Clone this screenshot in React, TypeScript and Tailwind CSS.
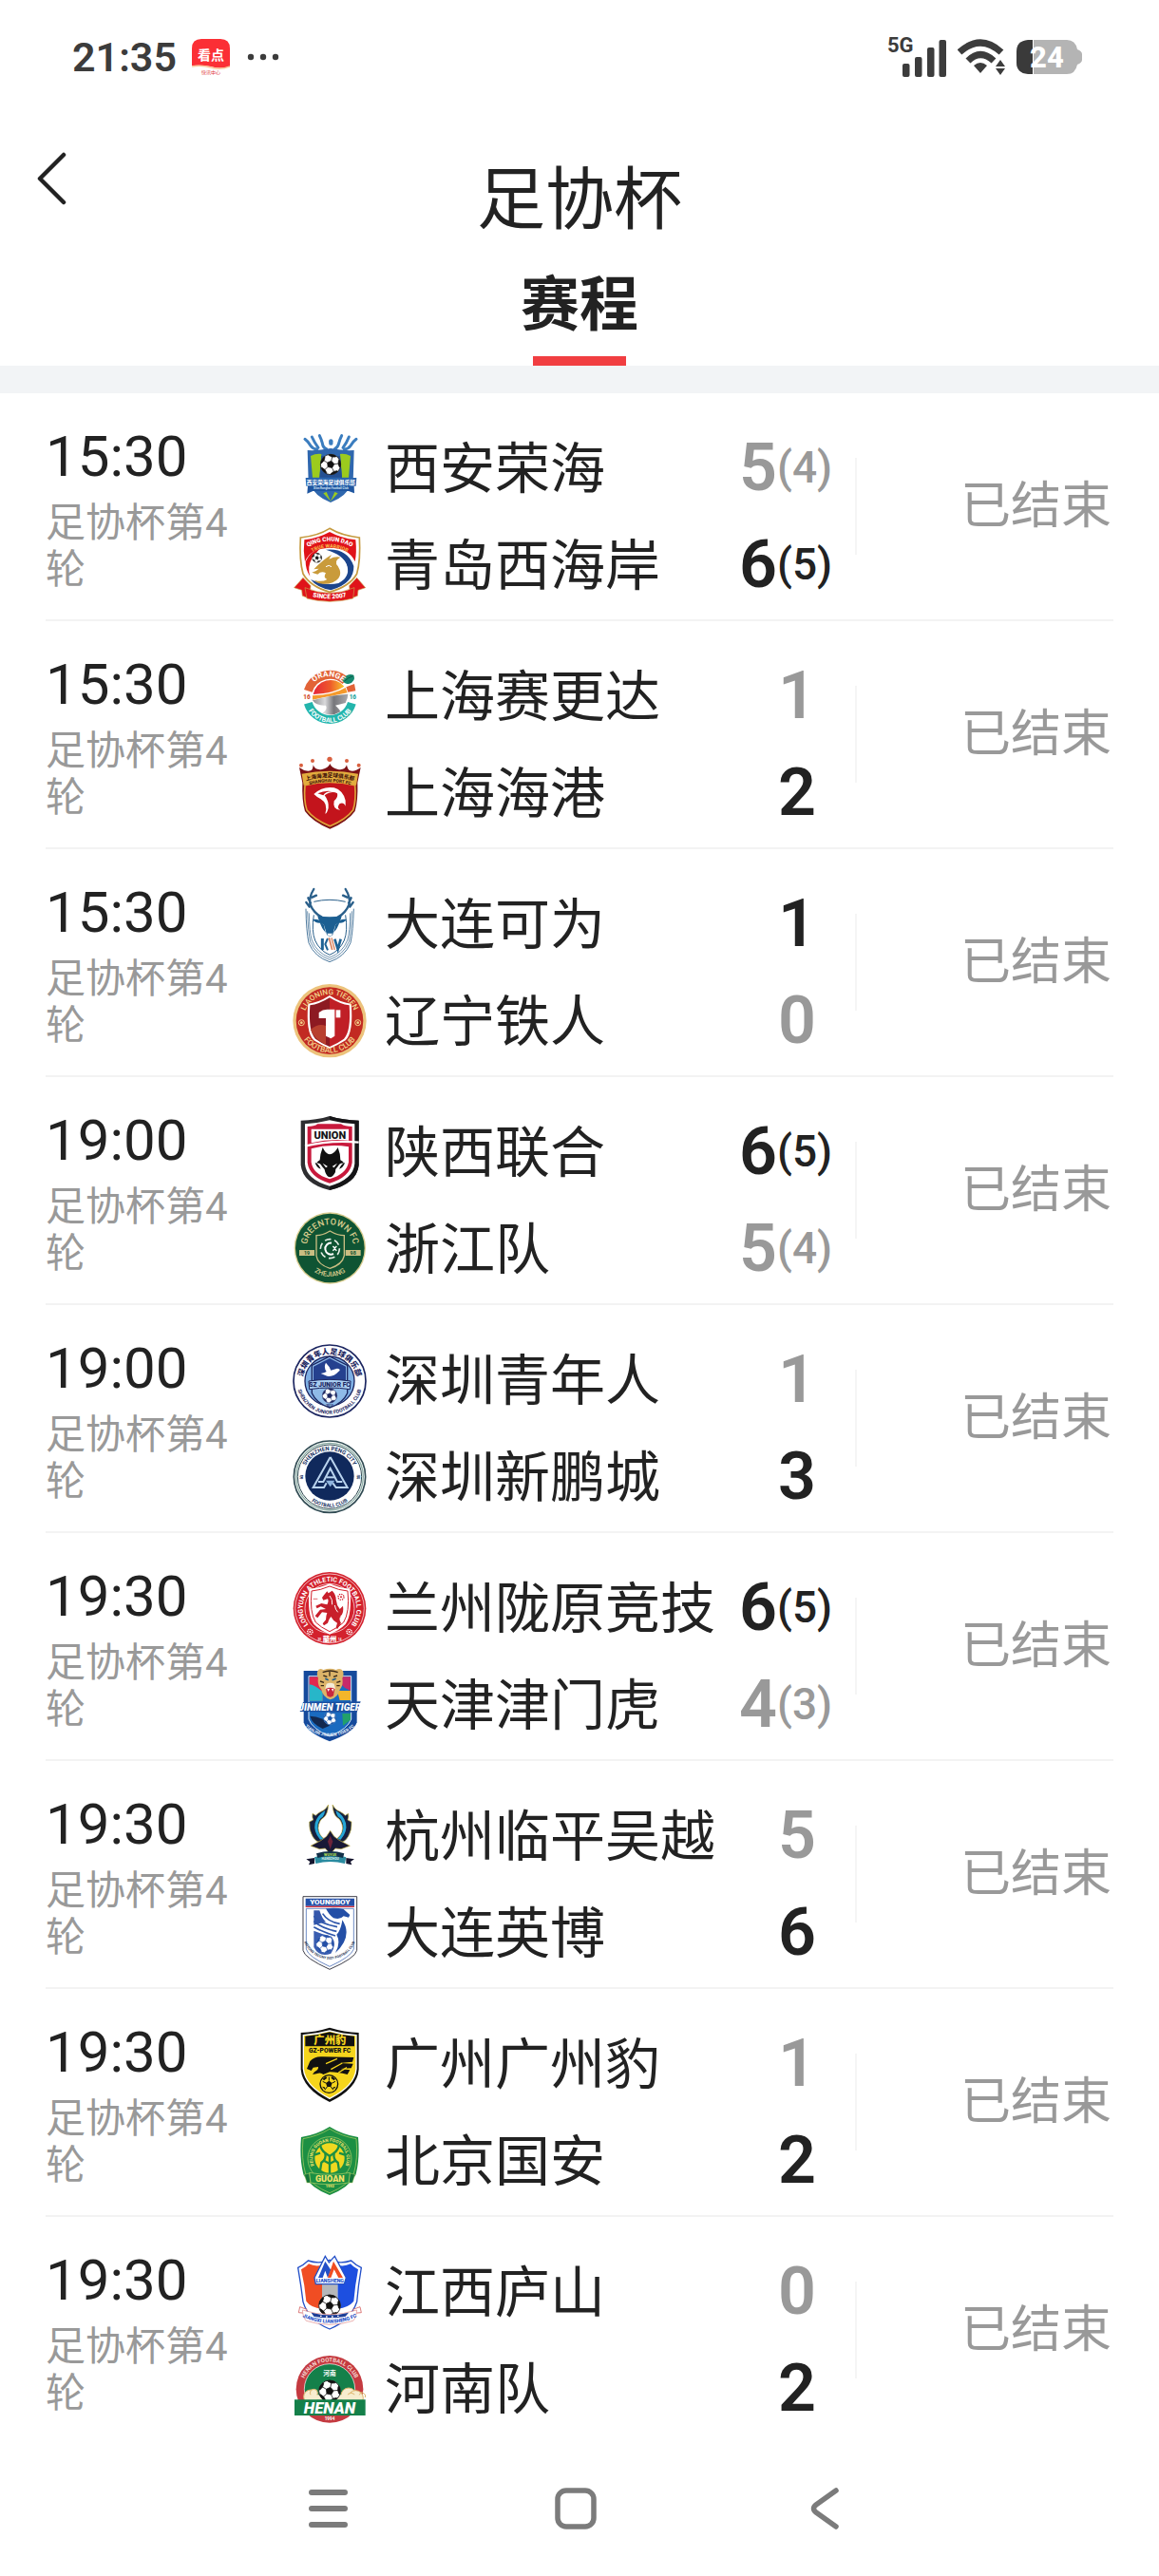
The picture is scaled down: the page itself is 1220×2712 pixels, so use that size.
import { useId } from "react";
import type { ReactNode } from "react";

/* ---------- Drawing helpers for the club badges ---------- */

function Badge({ name, top, children }: { name: string; top: number; children: ReactNode }) {
  return (
    <svg
      role="img"
      aria-label={name}
      viewBox={`52 ${top} 240 240`}
      className="size-20 shrink-0 overflow-visible font-['Roboto','Noto_Sans_CJK_SC',sans-serif]"
    >
      {children}
    </svg>
  );
}

function Ball({ cx, cy, r, dark = "#111" }: { cx: number; cy: number; r: number; dark?: string }) {
  const id = useId();
  const point = (radius: number, deg: number) => {
    const a = ((deg - 90) * Math.PI) / 180;
    return `${(radius * Math.cos(a)).toFixed(1)},${(radius * Math.sin(a)).toFixed(1)}`;
  };
  const turns = [0, 72, 144, 216, 288];
  return (
    <g transform={`translate(${cx} ${cy})`}>
      <clipPath id={id}>
        <circle r={r} />
      </clipPath>
      <circle r={r} fill="#fff" />
      <g clipPath={`url(#${id})`} stroke={dark} strokeWidth={r * 0.07}>
        <polygon points={turns.map((t) => point(r * 0.36, t + 12)).join(" ")} fill={dark} />
        {turns.map((t) => (
          <g key={t}>
            <path d={`M${point(r * 0.36, t + 12)} L${point(r * 0.8, t + 12)}`} />
            <polygon
              points={[
                point(r * 0.76, t + 12),
                point(r * 0.9, t - 10),
                point(r * 1.15, t - 8),
                point(r * 1.15, t + 32),
                point(r * 0.9, t + 34),
              ].join(" ")}
              fill={dark}
            />
          </g>
        ))}
      </g>
      <circle r={r} fill="none" stroke={dark} strokeWidth={r * 0.08} />
    </g>
  );
}

type ArcProps = {
  cx: number;
  cy: number;
  r: number;
  size: number;
  fill: string;
  under?: boolean;
  weight?: number;
  children: string;
};

function ArcText({ cx, cy, r, size, fill, under = false, weight = 700, children }: ArcProps) {
  const id = useId();
  const d = under
    ? `M${cx} ${cy - r} A${r} ${r} 0 0 0 ${cx} ${cy + r} A${r} ${r} 0 0 0 ${cx} ${cy - r}`
    : `M${cx} ${cy + r} A${r} ${r} 0 0 1 ${cx} ${cy - r} A${r} ${r} 0 0 1 ${cx} ${cy + r}`;
  return (
    <>
      <path id={id} d={d} fill="none" />
      <text fontSize={size} fontWeight={weight} fill={fill} textAnchor="middle">
        <textPath href={`#${id}`} startOffset="50%">
          {children}
        </textPath>
      </text>
    </>
  );
}

type LabelProps = {
  x: number;
  y: number;
  size: number;
  fill: string;
  weight?: number;
  italic?: boolean;
  children: string;
};

function Label({ x, y, size, fill, weight = 700, italic = false, children }: LabelProps) {
  return (
    <text
      x={x}
      y={y}
      fontSize={size}
      fontWeight={weight}
      fontStyle={italic ? "italic" : "normal"}
      fill={fill}
      textAnchor="middle"
    >
      {children}
    </text>
  );
}

/* ---------- Club badges ---------- */

function XianRonghai() {
  return (
    <Badge name="西安荣海" top={66}>
      <g fill="none" stroke="#3b7dbf" strokeWidth="9" strokeLinecap="round">
        <path d="M94 97 Q104 104 112 118 Q118 128 132 129" />
        <path d="M116 90 Q124 108 136 124" />
        <path d="M140 86 Q146 98 149 110 Q151 124 162 128" />
        <path d="M176 103 V110" strokeWidth="13" />
        <path d="M210 86 Q204 98 201 110 Q198 124 188 128" />
        <path d="M233 90 Q226 108 214 124" />
        <path d="M256 97 Q246 104 238 118 Q232 128 218 129" />
      </g>
      <path d="M102 132 Q138 134 175 126 Q212 134 249 132 L246 232 Q226 278 175 297 Q124 278 105 232Z" fill="#2f67ae" />
      <path d="M112 150 Q128 142 146 144 L140 218 H118Z" fill="#9ccb1e" />
      <path d="M238 150 Q222 142 205 144 L211 218 H232Z" fill="#9ccb1e" />
      <path d="M146 150 H205 L211 218 H140Z" fill="#245093" />
      <path d="M152 268 L175 293 L162 264Z M198 268 L175 293 L188 264Z" fill="#9ccb1e" />
      <Ball cx={175} cy={177} r={32} />
      <path d="M96 219 H257 L255 245 H98Z" fill="#2b66b0" />
      <path d="M103 245 H249 L250 268 L232 261 H119 L101 269Z" fill="#1f56a0" />
      <Label x={176} y={239} size={17} fill="#fff">西安荣海足球俱乐部</Label>
      <Label x={176} y={255} size={9} fill="#cfe0f3">Xi'an Ronghai Football Club</Label>
    </Badge>
  );
}

function QingdaoWestCoast() {
  return (
    <Badge name="青岛西海岸" top={372}>
      <path d="M60 566 L88 535 L112 560 L108 600 L86 592 L84 574Z" fill="#e0131a" stroke="#c9a04a" strokeWidth="2" />
      <path d="M285 566 L258 535 L234 560 L238 600 L260 592 L262 574Z" fill="#e0131a" stroke="#c9a04a" strokeWidth="2" />
      <path d="M172 379 Q210 402 266 408 Q270 480 258 522 Q236 562 172 580 Q110 562 88 522 Q76 480 80 408 Q136 402 172 379Z" fill="#fff" stroke="#c59a3f" strokeWidth="5" />
      <path d="M172 390 Q208 410 254 415 Q258 456 252 484 Q234 440 172 440 Q110 442 94 484 Q88 450 92 415 Q136 410 172 390Z" fill="#e0131a" />
      <path d="M96 484 Q110 452 140 444 L118 470 Q100 500 110 530 Q96 510 96 484Z" fill="#e0131a" />
      <path d="M160 446 Q228 440 248 498 Q250 552 176 574 Q132 566 112 540 Q158 562 200 552 Q236 532 228 500 Q218 462 160 446Z" fill="#1c458c" />
      <path d="M196 464 Q240 486 222 530 Q204 556 170 550 Q232 516 196 464Z" fill="#fff" />
      <path d="M122 508 Q150 478 178 462 L170 476 Q190 466 206 470 Q184 482 198 498 Q212 520 200 536 Q184 556 150 554 Q130 552 124 542 Q146 550 164 540 Q150 534 160 520 Q146 512 134 524 L116 518 Q128 516 138 506Z" fill="#c99b3b" />
      <path d="M160 500 q10 -8 18 0" stroke="#fff" strokeWidth="3" fill="none" />
      <Ball cx={132} cy={472} r={15} />
      <ArcText cx={172} cy={560} r={141} size={19} fill="#fff" weight={900}>QING CHUN DAO</ArcText>
      <ArcText cx={172} cy={560} r={120} size={16} fill="#f6ae45" weight={900}>TRUE WARRIOR</ArcText>
      <path d="M94 566 Q172 600 250 566 L246 600 Q172 620 100 600Z" fill="#e0131a" stroke="#c9a04a" strokeWidth="2" />
      <ArcText cx={172} cy={370} r={231} size={20} fill="#fff" weight={900} under>SINCE 2007</ArcText>
    </Badge>
  );
}

function ShanghaiSegenda() {
  const sun = useId();
  const steel = useId();
  return (
    <Badge name="上海赛更达" top={786}>
      <defs>
        <linearGradient id={sun}>
          <stop offset="0" stopColor="#e5243a" />
          <stop offset="0.55" stopColor="#ee5a2a" />
          <stop offset="1" stopColor="#f8c62d" />
        </linearGradient>
        <linearGradient id={steel}>
          <stop offset="0" stopColor="#8d8d90" />
          <stop offset="0.35" stopColor="#d9d9db" />
          <stop offset="0.6" stopColor="#77777b" />
          <stop offset="1" stopColor="#a9a9ad" />
        </linearGradient>
      </defs>
      <path d="M104 892 A72 72 0 0 1 222 860" fill="none" stroke="#e26337" strokeWidth="27" />
      <path d="M224 880 L250 870 L254 892 L230 896Z" fill="#e26337" />
      <path d="M104 931 A72 72 0 0 0 242 931" fill="none" stroke="#23b5ac" strokeWidth="27" />
      <path d="M120 903 A56 56 0 0 1 218 878 Q190 898 120 903Z" fill={`url(#${sun})`} />
      <path d="M118 907 Q186 904 222 882 L228 898 Q190 906 118 920Z" fill="#f59a2c" />
      <path d="M118 922 Q170 906 230 902 Q230 914 222 930 L190 938 Q204 950 206 958 Q180 974 150 962 Q166 950 160 938 Q130 940 118 922Z" fill={`url(#${steel})`} />
      <path d="M212 860 Q224 834 248 842 Q256 862 232 870 Q220 870 212 860Z" fill="#16896f" />
      <path d="M218 862 Q230 850 246 845" stroke="#0c5b4b" strokeWidth="3" fill="none" />
      <ArcText cx={168} cy={912} r={65} size={25} fill="#fff" weight={700}>ORANGE</ArcText>
      <ArcText cx={173} cy={912} r={80} size={21} fill="#fff" under>FOOTBALL CLUB</ArcText>
      <Label x={100} y={917} size={19} fill="#d3502f" weight={900}>16</Label>
      <Label x={245} y={917} size={19} fill="#2aa79f" weight={900}>16</Label>
    </Badge>
  );
}

function ShanghaiPort() {
  return (
    <Badge name="上海海港" top={1092}>
      <g fill="#d9603f">
        <circle cx="82" cy="1127" r="6" />
        <circle cx="118" cy="1113" r="6" />
        <circle cx="172" cy="1108" r="8" />
        <circle cx="226" cy="1113" r="6" />
        <circle cx="264" cy="1127" r="6" />
      </g>
      <path d="M76 1134 Q94 1148 112 1144 Q120 1140 120 1126 Q126 1144 148 1140 Q168 1136 173 1122 Q178 1136 198 1140 Q220 1144 226 1126 Q228 1140 236 1144 Q252 1148 270 1134 L260 1182 Q262 1240 252 1272 Q228 1306 173 1328 Q118 1306 94 1272 Q84 1240 86 1182Z" fill="#7b1216" />
      <path d="M94 1190 Q172 1170 252 1190 Q256 1240 246 1268 Q224 1298 173 1319 Q122 1298 100 1268 Q90 1240 94 1190Z" fill="#c3141c" stroke="#e0a23a" strokeWidth="5" />
      <path d="M84 1154 Q172 1136 262 1154 L256 1190 Q172 1168 90 1190Z" fill="#e3ad3e" />
      <path d="M122 1218 Q150 1192 186 1198 Q214 1206 222 1238 L222 1256 Q216 1242 204 1248 Q192 1262 206 1268 Q180 1268 186 1240 Q200 1228 196 1216 Q180 1206 156 1222 Q170 1240 168 1262 Q164 1278 158 1280 Q168 1248 144 1234 Q130 1226 122 1218Z" fill="#fff" />
      <path d="M134 1216 Q160 1204 182 1210 Q160 1208 152 1222Z" fill="#c3141c" />
      <ArcText cx={173} cy={1420} r={255} size={17} fill="#4b1a0c" weight={900}>上海海港足球俱乐部</ArcText>
      <ArcText cx={173} cy={1420} r={240} size={14} fill="#4b1a0c" weight={900}>SHANGHAI PORT FC</ArcText>
    </Badge>
  );
}

function DalianKewei() {
  return (
    <Badge name="大连可为" top={36}>
      <g fill="none" stroke="#2a5f8a">
        <path d="M97 110 Q98 180 106 218 Q124 262 172 278 Q220 262 238 218 Q246 180 248 110" strokeWidth="2.5" />
        <path d="M102 118 Q104 184 111 214 Q128 256 172 271 Q216 256 233 214 Q240 184 242 118" strokeWidth="2" />
        <path d="M107 124 Q108 184 116 210 Q132 250 172 264 Q212 250 228 210 Q236 184 237 124" strokeWidth="2" />
        <path d="M122 130 Q114 180 126 210 Q140 242 172 256 Q204 242 218 210 Q230 180 222 130" strokeWidth="3" />
        <path d="M122 88 Q172 76 222 88" strokeWidth="3" />
      </g>
      <g fill="none" stroke="#2a5f8a" strokeLinecap="round" strokeLinejoin="round">
        <path d="M146 136 Q122 124 110 96 Q106 74 122 48 M112 92 L104 76 M108 104 L98 90 M117 74 L130 68" strokeWidth="7" />
        <path d="M199 136 Q222 124 234 96 Q238 74 222 48 M232 92 L240 76 M236 104 L246 90 M227 74 L214 68" strokeWidth="7" />
      </g>
      <path d="M134 132 Q172 140 210 132 Q208 152 190 162 Q184 180 182 192 Q172 202 163 192 Q160 180 154 162 Q136 152 134 132Z" fill="#1c5f92" />
      <path d="M118 144 Q138 140 148 154 Q128 158 118 144Z M226 144 Q206 140 196 154 Q216 158 226 144Z" fill="#1c5f92" />
      <path d="M140 150 Q146 172 160 186 Q156 176 154 162Z M204 150 Q198 172 184 186 Q188 176 190 162Z" fill="#1c5f92" />
      <path d="M164 188 H181 L177 196 H168Z" fill="#fff" />
      <g fill="none">
        <path d="M149 204 V240" stroke="#1f6395" strokeWidth="9" />
        <path d="M166 204 L158 222 L166 241" stroke="#1f6395" strokeWidth="6" />
        <path d="M170 202 L180 240" stroke="#d9825e" strokeWidth="5" />
        <path d="M178 202 L188 240" stroke="#d9825e" strokeWidth="4" />
        <path d="M188 206 L198 238 L207 206" stroke="#1f6395" strokeWidth="8" />
      </g>
    </Badge>
  );
}

function LiaoningTieren() {
  return (
    <Badge name="辽宁铁人" top={342}>
      <circle cx="172" cy="464" r="116" fill="#ecc37c" />
      <circle cx="172" cy="464" r="106" fill="#c22a22" />
      <path d="M172 384 Q210 408 240 410 Q248 500 222 526 Q200 540 172 552 Q144 540 122 526 Q96 500 104 410 Q134 408 172 384Z" fill="#fff" />
      <path d="M172 391 Q206 412 234 415 Q240 498 217 521 Q198 535 172 546Z" fill="#c01f26" />
      <path d="M172 391 Q138 412 110 415 Q104 498 127 521 Q146 535 172 546Z" fill="#8d1a22" />
      <path d="M112 492 Q136 470 160 480 V540 Q120 520 112 492Z" fill="#b8402f" />
      <path d="M138 438 Q150 428 164 428 H188 V512 L176 520 L160 512 V456 H138Z" fill="#fff" />
      <path d="M192 430 H206 V454 H192Z" fill="#fff" />
      <ArcText cx={172} cy={464} r={83} size={24} fill="#f3d58c" weight={500}>LIAONING TIEREN</ArcText>
      <ArcText cx={172} cy={464} r={101} size={25} fill="#f3d58c" weight={500} under>FOOTBALL CLUB</ArcText>
      <g fill="none" stroke="#f3d58c" strokeWidth="3">
        <circle cx="83" cy="470" r="9" />
        <circle cx="261" cy="470" r="9" />
      </g>
      <circle cx="83" cy="470" r="4" fill="#f3d58c" />
      <circle cx="261" cy="470" r="4" fill="#f3d58c" />
    </Badge>
  );
}

function ShaanxiUnion() {
  return (
    <Badge name="陕西联合" top={756}>
      <path d="M172 765 Q214 778 264 779 V920 Q258 978 172 999 Q88 978 81 920 V779 Q130 778 172 765Z" fill="#2e2e31" />
      <path d="M172 765 Q214 778 264 779 V920 Q258 978 172 999Z" fill="#151517" />
      <path d="M172 778 Q210 788 251 790 V916 Q246 966 172 986 Q98 966 94 916 V790 Q134 788 172 778Z" fill="#fff" />
      <path d="M102 798 Q124 798 134 790 H208 Q220 798 243 798 V912 Q236 958 172 977 Q108 958 102 912Z" fill="#c8193c" />
      <path d="M114 806 H232 V842 Q172 836 114 850Z" fill="#fff" />
      <path d="M94 860 Q172 840 264 848" stroke="#fff" strokeWidth="7" fill="none" />
      <path d="M114 868 Q172 852 232 862 V910 Q226 948 172 964 Q118 948 114 910Z" fill="#fff" />
      <path d="M150 864 Q160 886 172 886 Q186 886 198 864 Q206 884 206 904 Q214 908 218 914 Q204 912 198 924 Q190 930 190 942 Q182 958 173 958 Q164 958 158 942 Q156 930 148 924 Q142 912 130 914 Q134 908 141 904 Q142 884 150 864Z" fill="#111" />
      <path d="M126 912 Q136 914 144 932 Q130 928 126 912Z M220 912 Q210 914 202 932 Q216 928 220 912Z" fill="#111" />
      <path d="M150 914 L166 924 L160 928Z M196 914 L180 924 L186 928Z" fill="#fff" />
      <Label x={173} y={836} size={33} fill="#151517" weight={900}>UNION</Label>
    </Badge>
  );
}

function ZhejiangGreentown() {
  return (
    <Badge name="浙江队" top={1062}>
      <circle cx="173" cy="1182" r="113" fill="#d8cc8e" />
      <circle cx="173" cy="1182" r="109" fill="#0f5433" />
      <path d="M173 1128 Q196 1142 218 1142 V1206 Q212 1234 173 1246 Q134 1234 130 1206 V1142 Q150 1142 173 1128Z" fill="none" stroke="#c9bd82" strokeWidth="4" />
      <circle cx="173" cy="1184" r="30" fill="none" stroke="#e7efe6" strokeWidth="5" strokeDasharray="20 11" />
      <path d="M178 1166 A18 18 0 1 0 184 1200" fill="none" stroke="#fff" strokeWidth="6" />
      <path d="M182 1176 l6 6 l6 -6 M182 1190 l6 -6 l6 6" stroke="#fff" strokeWidth="4" fill="none" />
      <path d="M76 1188 H124 V1206 H76Z M222 1188 H270 V1206 H222Z" fill="#c9bd82" />
      <Label x={100} y={1203} size={16} fill="#0f5433">19</Label>
      <Label x={246} y={1203} size={16} fill="#0f5433">98</Label>
      <ArcText cx={173} cy={1182} r={74} size={28} fill="#d8cc8e" weight={500}>GREENTOWN FC</ArcText>
      <ArcText cx={173} cy={1182} r={90} size={22} fill="#d8cc8e" weight={500} under>ZHEJIANG</ArcText>
    </Badge>
  );
}

function ShenzhenJuniors() {
  return (
    <Badge name="深圳青年人" top={36}>
      <circle cx="172" cy="162" r="114" fill="#fff" stroke="#1b2560" strokeWidth="5" />
      <circle cx="172" cy="162" r="78" fill="#7fb0e4" stroke="#1b2560" strokeWidth="4" />
      <path d="M172 84 L228 112 V200 Q214 232 172 246 Q130 232 116 200 V112Z" fill="#8fbbe8" stroke="#1b2560" strokeWidth="4" />
      <path d="M172 90 L223 116 V160 H121 V116Z" fill="#25418f" />
      <path d="M160 104 Q172 116 176 128 L196 122 Q210 124 200 132 Q184 150 164 146 L144 138 Q156 136 162 132 Q152 118 160 104Z" fill="#fff" />
      <path d="M106 162 Q172 152 238 162 L236 188 Q172 178 108 188Z" fill="#a9cdf0" stroke="#1b2560" strokeWidth="3" />
      <Label x={172} y={179} size={20} fill="#1b2560" weight={900}>SZ JUNIOR FC</Label>
      <Ball cx={172} cy={208} r={23} dark="#1b2560" />
      <Label x={172} y={242} size={10} fill="#1b2560">2015</Label>
      <ArcText cx={172} cy={162} r={85} size={24} fill="#1b2560" weight={900}>深圳青年人足球俱乐部</ArcText>
      <ArcText cx={172} cy={162} r={104} size={16} fill="#1b2560" under>SHENZHEN JUNIOR FOOTBALL CLUB</ArcText>
    </Badge>
  );
}

function ShenzhenPengCity() {
  return (
    <Badge name="深圳新鹏城" top={342}>
      <circle cx="172" cy="464" r="113" fill="#fff" stroke="#2f4a52" strokeWidth="5" />
      <circle cx="172" cy="464" r="106" fill="none" stroke="#8fb0a8" strokeWidth="4" />
      <circle cx="172" cy="464" r="101" fill="none" stroke="#2f4a52" strokeWidth="3" />
      <circle cx="172" cy="462" r="77" fill="#10295c" />
      <g fill="none" stroke="#b9d3ee" strokeWidth="6" strokeLinejoin="miter">
        <path d="M174 402 L120 498 H154 L162 484 M182 484 L192 498 H228 L174 402" />
        <path d="M136 480 H152 L174 438 L196 480 H212" />
        <path d="M162 466 H188" />
      </g>
      <path d="M160 476 H188 L174 496Z" fill="#8fb4de" />
      <ArcText cx={172} cy={464} r={83} size={18} fill="#16305f">SHENZHEN PENG CITY</ArcText>
      <ArcText cx={172} cy={464} r={96} size={16} fill="#16305f" under>FOOTBALL CLUB</ArcText>
      <Label x={83} y={471} size={12} fill="#16305f">深</Label>
      <Label x={263} y={471} size={12} fill="#16305f">圳</Label>
    </Badge>
  );
}

function LanzhouLongyuan() {
  return (
    <Badge name="兰州陇原竞技" top={36}>
      <circle cx="172" cy="160" r="115" fill="#d3212d" />
      <circle cx="172" cy="160" r="109" fill="none" stroke="#fff" strokeWidth="2" />
      <circle cx="172" cy="160" r="78" fill="none" stroke="#fff" strokeWidth="2" />
      <path d="M172 82 Q204 96 236 98 Q244 176 222 210 Q204 228 172 242 Q140 228 122 210 Q100 176 108 98 Q140 96 172 82Z" fill="#fff" />
      <path d="M172 90 Q202 103 229 105 Q236 172 216 204 Q200 220 172 233 Q144 220 128 204 Q108 172 115 105 Q142 103 172 90Z" fill="none" stroke="#d3212d" strokeWidth="3" />
      <path d="M154 118 L164 106 L168 112 L180 104 Q192 116 192 132 Q194 150 204 162 L214 152 Q218 176 206 184 Q200 196 208 206 L196 226 L192 220 L196 206 Q182 198 176 186 Q168 196 166 206 L154 214 L150 208 L160 196 Q160 184 164 174 L148 172 L134 190 L126 184 L142 164 L160 162 L144 154 L132 160 L128 152 L146 144 L164 148 Q170 136 166 130 L152 134 L148 126Z" fill="#c81f2b" />
      <path d="M172 120 Q182 132 180 148 M188 150 Q190 164 198 172" stroke="#fff" strokeWidth="3" fill="none" />
      <circle cx="208" cy="124" r="9" fill="none" stroke="#d3212d" strokeWidth="4" strokeDasharray="4 3" />
      <circle cx="208" cy="124" r="3" fill="#d3212d" />
      <path d="M120 130 h14 M194 186 h14" stroke="#d3212d" strokeWidth="2" />
      <ArcText cx={172} cy={160} r={85} size={21} fill="#fff">LONGYUAN ATHLETIC FOOTBALL CLUB</ArcText>
      <g fill="none" stroke="#fff" strokeWidth="4" strokeDasharray="4 2">
        <circle cx="110" cy="234" r="8" />
        <circle cx="234" cy="234" r="8" />
      </g>
      <circle cx="110" cy="234" r="3" fill="#fff" />
      <circle cx="234" cy="234" r="3" fill="#fff" />
      <Label x={172} y={264} size={22} fill="#fff" weight={900}>蘭州</Label>
      <Label x={140} y={262} size={9} fill="#fff">20</Label>
      <Label x={204} y={262} size={9} fill="#fff">14</Label>
    </Badge>
  );
}

function TianjinJinmenTiger() {
  return (
    <Badge name="天津津门虎" top={342}>
      <path d="M90 357 H258 V520 Q248 552 172 580 Q100 552 90 520Z" fill="#164a9c" />
      <path d="M106 374 H240 V510 Q230 540 172 564 Q116 540 106 510Z" fill="#1a6bc0" stroke="#d5e6f5" strokeWidth="3" />
      <path d="M108 376 H150 V452 H108Z" fill="#e2284f" />
      <path d="M108 400 Q130 404 150 424 V452 H108Z" fill="#27b6c9" />
      <path d="M196 420 H238 V450 H204Z" fill="#f3b62b" />
      <path d="M208 376 H238 V420 Q220 414 208 400Z" fill="#c62a6a" />
      <path d="M110 500 Q150 500 172 530 L150 540 Q116 524 110 500Z" fill="#13294f" />
      <path d="M212 492 H238 V512 L214 530Z" fill="#22a06a" />
      <path d="M134 358 Q140 346 152 354 Q174 346 192 354 Q206 346 214 358 Q218 370 212 380 Q216 402 204 416 Q200 440 174 448 Q150 440 146 416 Q132 402 136 380 Q130 370 134 358Z" fill="#dcb469" />
      <path d="M150 362 Q174 352 198 362 M152 372 L164 376 M196 372 L184 376 M142 390 L154 394 M206 390 L194 394 M172 356 V374 M144 404 L154 404 M204 404 L194 404" stroke="#3a2a1a" strokeWidth="4" fill="none" />
      <path d="M158 382 l10 4 M192 382 l-12 4" stroke="#1a5a8a" strokeWidth="5" />
      <path d="M162 398 Q174 392 186 398 L190 414 H158Z" fill="#f5ecd8" />
      <path d="M160 414 Q174 406 188 414 L184 436 Q174 444 164 436Z" fill="#c8283e" />
      <path d="M164 414 l4 9 l4 -9 M178 414 l4 9 l3 -9" fill="#fff" />
      <path d="M78 486 L88 456 L270 454 L258 488Z" fill="#1b4f9f" />
      <Label x={173} y={482} size={30} fill="#fff" weight={900} italic>JINMEN TIGER</Label>
      <Ball cx={173} cy={507} r={20} dark="#1a57a8" />
      <ArcText cx={172} cy={450} r={114} size={14} fill="#e5effa" under>TIANJIN JINMEN TIGER FC</ArcText>
    </Badge>
  );
}

function HangzhouWuyue() {
  const wing =
    "M168 60 Q160 74 152 78 Q134 86 128 94 L118 88 Q116 100 120 108 L108 114 Q106 140 118 160 Q126 176 146 182 L160 170 Q138 160 136 134 Q138 108 154 100 Q166 90 168 60Z";
  const feather = "M158 78 Q132 94 126 118 Q120 146 142 170 L152 168 Q134 152 134 130 Q136 104 150 98 Q156 90 158 78Z";
  return (
    <Badge name="杭州临平吴越" top={36}>
      <path d={wing} fill="#16203f" stroke="#c8b84a" strokeWidth="2" />
      <path d={feather} fill="#25a6d6" />
      <g transform="translate(349 0) scale(-1 1)">
        <path d={wing} fill="#16203f" stroke="#c8b84a" strokeWidth="2" />
        <path d={feather} fill="#25a6d6" />
      </g>
      <path d="M174 142 L186 160 L202 172 L236 190 L208 200 L190 198 L174 216 L158 198 L140 200 L112 190 L146 172 L162 160Z" fill="#191936" stroke="#c8b84a" strokeWidth="2" />
      <path d="M174 158 L182 176 L174 200 L166 176Z" fill="#6d2339" />
      <path d="M98 232 L124 228 V246 L106 250 L110 240Z M250 232 L224 228 V246 L242 250 L238 240Z" fill="#15152e" />
      <path d="M124 226 Q174 208 224 226 L220 246 Q174 234 128 246Z" fill="#2a8ba0" />
      <path d="M130 214 Q174 200 218 214 L214 228 Q174 216 134 228Z" fill="#123049" />
      <Label x={174} y={221} size={12} fill="#a9d45a" weight={900}>WUYUE</Label>
      <Label x={174} y={235} size={10} fill="#dff0e8">HANGZHOU</Label>
    </Badge>
  );
}

function DalianYoungboy() {
  return (
    <Badge name="大连英博" top={342}>
      <path d="M88 350 H258 V520 Q254 544 172 580 Q92 544 88 520Z" fill="#fff" stroke="#3f3f4a" strokeWidth="3" />
      <path d="M96 356 H250 V380 H96Z" fill="#2450a8" />
      <path d="M96 380 H250 V384 H96Z" fill="#d8303a" />
      <path d="M98 388 H248 V516 Q240 540 172 571 Q104 540 98 516Z" fill="#fff" stroke="#2450a8" strokeWidth="2" />
      <Label x={173} y={376} size={24} fill="#fff" weight={900}>YOUNGBOY</Label>
      <path d="M122 394 H140 Q148 420 160 430 L122 440Z" fill="#3558ac" />
      <path d="M160 388 Q192 384 216 390 L236 408 L232 416 L216 412 Q206 424 184 418 Q170 408 160 388Z" fill="#244fa6" />
      <g fill="none" stroke="#2f57ab" strokeWidth="5">
        <path d="M122 412 Q140 436 196 446" />
        <path d="M122 428 Q146 450 194 460" />
        <path d="M122 446 Q150 462 190 474" />
        <path d="M150 404 Q166 430 204 436" />
      </g>
      <path d="M212 424 Q246 476 190 528 Q208 496 194 470 Q208 456 212 424Z" fill="#244fa6" />
      <path d="M122 458 Q150 470 178 476 Q196 500 176 530 Q140 544 122 510Z" fill="#3a5db0" />
      <Ball cx={157} cy={500} r={28} dark="#244fa6" />
      <ArcText cx={172} cy={462} r={86} size={11} fill="#20304f" under>BEITONG TECCNY 2021 FOOTBALL CLUB</ArcText>
    </Badge>
  );
}

function GuangzhouPower() {
  return (
    <Badge name="广州广州豹" top={36}>
      <path d="M172 44 Q218 58 264 60 V176 Q260 236 172 279 Q86 236 81 176 V60 Q128 58 172 44Z" fill="#111" />
      <path d="M172 54 Q216 66 256 68 V174 Q252 228 172 268 Q94 228 89 174 V68 Q130 66 172 54Z" fill="#f5d51c" stroke="#fff" strokeWidth="4" />
      <path d="M172 58 Q214 69 250 71 V103 H95 V71 Q132 69 172 58Z" fill="#111" />
      <Label x={173} y={96} size={34} fill="#f5d51c" weight={900}>广州豹</Label>
      <Label x={172} y={123} size={20} fill="#111" weight={900}>GZ-POWER FC</Label>
      <path d="M100 174 L110 150 Q124 134 150 136 L248 138 L244 152 L204 156 L246 158 L240 172 L206 174 L236 178 L228 192 Q196 184 172 184 L152 192 Q144 184 130 190 L118 192 L124 184 Q138 176 136 168 L120 170 L114 180Z" fill="#111" />
      <path d="M160 158 L196 142 M176 176 L212 156 M200 186 L226 170" stroke="#f5d51c" strokeWidth="4" />
      <circle cx="170" cy="222" r="30" fill="#111" />
      <circle cx="170" cy="222" r="26" fill="#f5d51c" />
      <path d="M170 212 l10 7 l-4 12 h-12 l-4 -12Z M150 206 l10 -8 l4 5 l-10 8Z M190 206 l-10 -8 l-4 5 l10 8Z M148 230 l8 2 l4 10Z M192 230 l-8 2 l-4 10Z" fill="#111" />
      <path d="M170 212 V200 M180 219 l10 -5 M176 231 l6 8 M164 231 l-6 8 M160 219 l-10 -5" stroke="#111" strokeWidth="3" />
    </Badge>
  );
}

function BeijingGuoan() {
  return (
    <Badge name="北京国安" top={342}>
      <path d="M172 357 Q212 382 262 390 Q268 460 254 510 Q232 550 172 573 Q112 550 90 510 Q76 460 82 390 Q132 382 172 357Z" fill="#1c8f43" />
      <path d="M172 364 Q210 387 256 395 Q262 458 248 506 Q228 544 172 566 Q116 544 96 506 Q82 458 88 395 Q134 387 172 364Z" fill="none" stroke="#b6d46a" strokeWidth="2" />
      <circle cx="172" cy="458" r="69" fill="none" stroke="#b6d46a" strokeWidth="2" />
      <circle cx="172" cy="456" r="47" fill="#f0d820" />
      <g fill="none" stroke="#1c8f43" strokeWidth="7">
        <path d="M142 412 Q144 430 158 440 Q162 460 146 470 L142 496" />
        <path d="M202 412 Q200 430 186 440 Q182 460 198 470 L202 496" />
        <path d="M158 440 L172 450 L186 440 M172 450 V472 M154 464 L172 474 L190 464" />
        <path d="M124 446 L142 440 M220 446 L202 440 M172 474 V506" />
      </g>
      <path d="M92 508 L108 504 L112 534 L100 534 Z M252 508 L236 504 L232 534 L244 534Z" fill="#15733a" stroke="#b6d46a" strokeWidth="1.5" />
      <path d="M108 502 Q172 514 236 502 L232 534 Q172 544 112 534Z" fill="#1c8f43" stroke="#b6d46a" strokeWidth="2" />
      <Label x={173} y={531} size={27} fill="#f2e36a" weight={900}>GUOAN</Label>
      <Label x={173} y={550} size={12} fill="#f2e36a">1992</Label>
      <ArcText cx={172} cy={458} r={54} size={14} fill="#f2e36a">BEIJING GUOAN FOOTBALL CLUB</ArcText>
    </Badge>
  );
}

function JiangxiLushan() {
  return (
    <Badge name="江西庐山" top={36}>
      <path d="M104 60 Q140 72 172 58 Q204 72 240 60 Q254 74 272 82 Q262 140 258 190 Q238 250 172 276 Q106 250 88 190 Q82 140 72 82 Q90 74 104 60Z" fill="#fff" stroke="#2450c8" strokeWidth="4" />
      <path d="M106 70 Q126 80 148 74 V212 Q112 208 98 188 Q94 140 82 88 Q98 80 106 70Z" fill="#f04d23" />
      <path d="M238 70 Q218 80 197 74 V212 Q232 208 248 188 Q252 140 262 88 Q246 80 238 70Z" fill="#1d4fe0" />
      <path d="M148 130 H197 V200 H148Z" fill="#b5b7ba" />
      <path d="M124 114 L158 46 L170 66 L188 46 L224 114 L218 134 H128Z" fill="#fff" stroke="#2450c8" strokeWidth="4" />
      <path d="M136 114 L158 62 L176 90 L166 114 L158 92 L150 114Z" fill="#2450c8" />
      <path d="M166 114 L184 62 L214 114 H200 L186 88 L176 114Z" fill="#f04d23" />
      <Label x={173} y={130} size={16} fill="#2450c8" weight={900}>LIANSHENG</Label>
      <Ball cx={172} cy={202} r={34} />
      <path d="M78 206 L100 214 L96 226 L74 224Z M268 206 L246 214 L250 226 L272 224Z" fill="#fff" stroke="#c93c3c" strokeWidth="2" />
      <path d="M86 216 Q172 244 258 216 Q256 240 246 250 Q172 274 98 250 Q88 240 86 216Z" fill="#fff" stroke="#e08a8a" strokeWidth="2" />
      <path d="M114 224 Q172 240 232 224 L222 236 Q172 246 122 236Z" fill="#1c3d96" />
      <path d="M142 235 h5 M160 237 h5 M178 237 h5 M196 235 h5" stroke="#fff" strokeWidth="4" />
      <ArcText cx={172} cy={60} r={197} size={16} fill="#2450c8" weight={900} under>JIANGXI LIANSHENG FC</ArcText>
    </Badge>
  );
}

function Henan() {
  return (
    <Badge name="河南队" top={342}>
      <circle cx="172" cy="466" r="106" fill="#c43a40" />
      <circle cx="172" cy="466" r="80" fill="#14804a" stroke="#fff" strokeWidth="2" />
      <g fill="#f7edcf" stroke="#dcb56a" strokeWidth="3">
        <circle cx="112" cy="490" r="22" />
        <circle cx="122" cy="478" r="12" />
        <circle cx="232" cy="486" r="24" />
        <circle cx="254" cy="494" r="24" />
        <circle cx="240" cy="490" r="12" />
      </g>
      <path d="M100 484 H260 V500 H100Z" fill="#f7edcf" />
      <path d="M266 484 Q272 470 280 480 Q288 482 284 492" fill="none" stroke="#dcb56a" strokeWidth="3" />
      <Ball cx={172} cy={472} r={34} />
      <path d="M61 499 H285 V549 H61Z" fill="#14804a" />
      <Label x={172} y={542} size={50} fill="#fff" weight={900} italic>HENAN</Label>
      <Label x={172} y={424} size={20} fill="#fff">河南</Label>
      <Label x={172} y={565} size={14} fill="#fff">1994</Label>
      <ArcText cx={172} cy={466} r={87} size={18} fill="#f6d9d4">HENAN FOOTBALL CLUB</ArcText>
    </Badge>
  );
}

/* ---------- Match data ---------- */

type Team = { name: string; badge: () => ReactNode; score: number; penalties?: number; won: boolean };
type Match = { time: string; round: string; status: string; teams: [Team, Team] };

const ROUND = "足协杯第4轮";
const FINISHED = "已结束";

function match(time: string, home: Team, away: Team): Match {
  return { time, round: ROUND, status: FINISHED, teams: [home, away] };
}

const matches: Match[] = [
  match(
    "15:30",
    { name: "西安荣海", badge: XianRonghai, score: 5, penalties: 4, won: false },
    { name: "青岛西海岸", badge: QingdaoWestCoast, score: 6, penalties: 5, won: true },
  ),
  match(
    "15:30",
    { name: "上海赛更达", badge: ShanghaiSegenda, score: 1, won: false },
    { name: "上海海港", badge: ShanghaiPort, score: 2, won: true },
  ),
  match(
    "15:30",
    { name: "大连可为", badge: DalianKewei, score: 1, won: true },
    { name: "辽宁铁人", badge: LiaoningTieren, score: 0, won: false },
  ),
  match(
    "19:00",
    { name: "陕西联合", badge: ShaanxiUnion, score: 6, penalties: 5, won: true },
    { name: "浙江队", badge: ZhejiangGreentown, score: 5, penalties: 4, won: false },
  ),
  match(
    "19:00",
    { name: "深圳青年人", badge: ShenzhenJuniors, score: 1, won: false },
    { name: "深圳新鹏城", badge: ShenzhenPengCity, score: 3, won: true },
  ),
  match(
    "19:30",
    { name: "兰州陇原竞技", badge: LanzhouLongyuan, score: 6, penalties: 5, won: true },
    { name: "天津津门虎", badge: TianjinJinmenTiger, score: 4, penalties: 3, won: false },
  ),
  match(
    "19:30",
    { name: "杭州临平吴越", badge: HangzhouWuyue, score: 5, won: false },
    { name: "大连英博", badge: DalianYoungboy, score: 6, won: true },
  ),
  match(
    "19:30",
    { name: "广州广州豹", badge: GuangzhouPower, score: 1, won: false },
    { name: "北京国安", badge: BeijingGuoan, score: 2, won: true },
  ),
  match(
    "19:30",
    { name: "江西庐山", badge: JiangxiLushan, score: 0, won: false },
    { name: "河南队", badge: Henan, score: 2, won: true },
  ),
];

/* ---------- Page parts ---------- */

function StatusBar() {
  return (
    <div className="flex h-[120px] items-center justify-between pr-20 pl-[76px] text-[#3c3c3c]">
      <div className="flex items-center">
        <span className="text-[43px] leading-[46px] font-semibold">21:35</span>
        <svg viewBox="0 0 40 38" className="ml-4 h-[38px] w-10" role="img" aria-label="看点">
          <path d="M0 10 Q0 0 10 0 H30 Q40 0 40 10 V29 Q30 32 20 29 Q10 27 0 28Z" fill="#fb2f35" />
          <path d="M0 29 Q10 27 20 30 Q30 33 40 29" fill="none" stroke="#f9c79b" strokeWidth="1.5" />
          <text x="20" y="22" fontSize="14" fontWeight="700" fill="#fff" textAnchor="middle">看点</text>
          <text x="20" y="37" fontSize="5" fill="#e0343a" textAnchor="middle">快讯中心</text>
        </svg>
        <svg viewBox="0 0 34 8" className="ml-[18px] h-2 w-[34px]" aria-hidden="true" fill="currentColor">
          <circle cx="4" cy="4" r="3.2" />
          <circle cx="17" cy="4" r="3.2" />
          <circle cx="30" cy="4" r="3.2" />
        </svg>
      </div>
      <div className="flex items-center">
        <svg viewBox="0 -8 64 60" className="h-[60px] w-16" role="img" aria-label="5G 信号" fill="currentColor">
          <text x="0" y="17" fontSize="22" fontWeight="700">5G</text>
          <rect x="16" y="29" width="7.5" height="14" rx="2" />
          <rect x="29" y="22" width="7.5" height="21" rx="2" />
          <rect x="42" y="12" width="7.5" height="31" rx="2" />
          <rect x="54.5" y="4" width="7.5" height="39" rx="2" />
        </svg>
        <svg viewBox="0 0 52 40" className="ml-2.5 h-10 w-[52px]" role="img" aria-label="无线网络">
          <g fill="none" stroke="currentColor" strokeWidth="7">
            <path d="M2 15 Q24 -5 46 15" />
            <path d="M11 24 Q24 11 38 24" />
          </g>
          <path d="M17 29 Q24 23 31 29 L24 37Z" fill="currentColor" />
          <path d="M45 23 L50 30 H40Z M45 39 L50 32 H40Z" fill="currentColor" />
        </svg>
        <svg viewBox="0 0 70 36" className="ml-2.5 h-9 w-[70px]" role="img" aria-label="电量 24%">
          <path d="M18 0 H53 Q62 0 64 10 Q69 12 69 15 V21 Q69 24 64 26 Q62 36 53 36 H18Z" fill="#b4b4b4" />
          <path d="M17 0 H12 Q0 1 0 12 V24 Q0 35 12 36 H17Z" fill="#3a3a3a" />
          <text x="32" y="29" fontSize="31" fontWeight="800" fill="#fff" textAnchor="middle">24</text>
        </svg>
      </div>
    </div>
  );
}

function Header() {
  return (
    <header className="relative flex flex-col items-center pt-11 font-['Noto_Sans_CJK_SC',sans-serif] text-[#222]">
      <button type="button" aria-label="返回" className="absolute top-8 left-[30px] p-1">
        <svg viewBox="0 0 36 60" className="h-[60px] w-9" fill="none" stroke="currentColor" strokeWidth="4.5" strokeLinecap="round" strokeLinejoin="round">
          <path d="M33 7 L8 32 L33 57" />
        </svg>
      </button>
      <h1 className="text-[72px] leading-20 font-normal">足协杯</h1>
      <nav className="mt-8">
        <button type="button" aria-current="page" className="flex flex-col items-center text-[62px] leading-20 font-bold">
          赛程
          <span className="mt-[19px] h-2.5 w-[98px] bg-[#f13e41]" />
        </button>
      </nav>
    </header>
  );
}

function TeamRow({ team }: { team: Team }) {
  const Crest = team.badge;
  const tone = team.won ? "text-[#222]" : "text-[#999]";
  const align = team.penalties === undefined ? "justify-center" : "justify-start";
  return (
    <div className="flex h-[102px] items-center">
      <Crest />
      <span className="ml-[18px] flex-1 pt-1 text-[58px] leading-[60px] whitespace-nowrap text-[#222]">{team.name}</span>
      <span className={`flex w-[122px] items-center font-semibold ${align} ${tone}`}>
        <span className="text-[70px] leading-[70px]">{team.score}</span>
        {team.penalties !== undefined && (
          <span className="text-[46px] leading-[46px] font-medium">({team.penalties})</span>
        )}
      </span>
    </div>
  );
}

function MatchRow({ match: m }: { match: Match }) {
  return (
    <li className="mx-12 flex border-b-2 border-[#f3f3f3] last:border-transparent">
      <div className="w-[200px] pt-[34px]">
        <time className="block text-[60px] leading-[66px] text-[#222]">{m.time}</time>
        <p className="mt-3 text-[42px] leading-[49px] text-[#999]">{m.round}</p>
      </div>
      <div className="ml-[59px] flex-1 pt-[27px] pb-[7px]">
        {m.teams.map((team) => (
          <TeamRow key={team.name} team={team} />
        ))}
      </div>
      <div className="h-[102px] w-0.5 self-center bg-[#f5f5f5]" />
      <p className="w-[270px] self-center pr-0.5 text-right text-[53px] leading-[60px] text-[#999]">{m.status}</p>
    </li>
  );
}

function NavigationBar() {
  return (
    <nav aria-label="系统导航" className="grid grid-cols-[1fr_245px_245px_1fr] pt-[41px] text-[#7b7b7b]">
      <button type="button" aria-label="最近任务" className="justify-self-end">
        <svg viewBox="0 0 52 52" className="-mr-1.5 size-[52px]" fill="none" stroke="currentColor" strokeWidth="6" strokeLinecap="round">
          <path d="M9 9 H44 M9 26 H44 M9 43 H44" />
        </svg>
      </button>
      <button type="button" aria-label="主屏幕" className="col-span-2 justify-self-center">
        <svg viewBox="0 0 52 52" className="mr-2 size-[52px]" fill="none" stroke="currentColor" strokeWidth="5.5">
          <rect x="7" y="7" width="38" height="38" rx="9" />
        </svg>
      </button>
      <button type="button" aria-label="返回" className="justify-self-start">
        <svg viewBox="0 0 52 52" className="-ml-3 size-[52px]" fill="none" stroke="currentColor" strokeWidth="5.5" strokeLinecap="round" strokeLinejoin="round">
          <path d="M37 7 L16 22 Q11 26 16 30 L37 45" />
        </svg>
      </button>
    </nav>
  );
}

export default function App() {
  return (
    <div className="min-h-screen bg-white font-['Roboto','Noto_Sans_CJK_SC',sans-serif]">
      <StatusBar />
      <Header />
      <div className="h-[29px] bg-[#f2f4f6]" />
      <main>
        <ul>
          {matches.map((m, i) => (
            <MatchRow key={i} match={m} />
          ))}
        </ul>
      </main>
      <NavigationBar />
    </div>
  );
}
